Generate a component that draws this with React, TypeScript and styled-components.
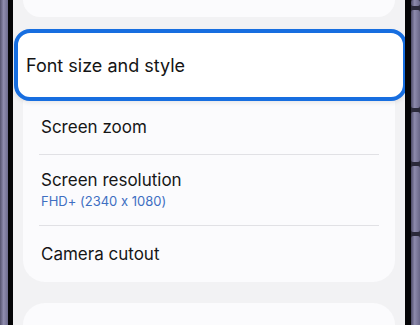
import React from "react";
import styled, { createGlobalStyle } from "styled-components";

const Global = createGlobalStyle`
  html, body {
    margin: 0;
    padding: 0;
    background: #000;
  }
  body {
    font-family: Inter, "Noto Sans", Roboto, sans-serif;
    font-feature-settings: "calt" 0;
    -webkit-font-smoothing: antialiased;
  }
`;

const Phone = styled.div`
  width: 420px;
  height: 325px;
  display: flex;
  overflow: hidden;
`;

const FrameLeft = styled.div`
  width: 8px;
  background: linear-gradient(90deg, #55536f 0%, #8f8cae 45%, #6e6c8e 100%);
`;

const FrameRight = styled.div`
  width: 9px;
  display: flex;
  flex-direction: column;
  gap: 4px;
  background: #2b2a3a;
`;

const Segment = styled.div<{ $h: number }>`
  height: ${(p) => p.$h}px;
  flex-shrink: 0;
  background: linear-gradient(90deg, #4d4b66 0%, #8d8aac 40%, #6a6889 100%);
  border-radius: 2px;
`;

const Bezel = styled.div<{ $w: number }>`
  width: ${(p) => p.$w}px;
  background: #050507;
`;

const Screen = styled.div`
  flex: 1;
  background: #f2f2f4;
  display: flex;
  flex-direction: column;
  overflow: hidden;
  & > * {
    flex-shrink: 0;
  }
`;

const TopCard = styled.div`
  height: 17px;
  margin: 0 10px;
  background: #fbfbfd;
  border-radius: 0 0 22px 22px;
`;

const Highlight = styled.div`
  height: 72px;
  box-sizing: border-box;
  margin: 12px -2px 0 1px;
  border: 4px solid #176ee0;
  border-radius: 16px;
  background: #ffffff;
  display: flex;
  align-items: center;
  padding-left: 8px;
  font-size: 18px;
  color: #141414;
  position: relative;
  z-index: 1;
  box-shadow: 0 2px 4px rgba(0, 0, 0, 0.08);
`;

const Card = styled.div`
  margin: 0 10px;
  background: #fbfbfd;
  border-radius: 0 0 22px 22px;
  display: flex;
  flex-direction: column;
`;

const Row = styled.div<{ $h: number }>`
  height: ${(p) => p.$h}px;
  padding-left: 18px;
  display: flex;
  flex-direction: column;
  justify-content: center;
`;

const Title = styled.div`
  font-size: 17px;
  color: #161616;
  line-height: 21px;
`;

const Sub = styled.div`
  font-size: 13px;
  color: #3f6fc2;
  line-height: 20px;
`;

const Divider = styled.div`
  height: 1px;
  margin: 0 16px;
  background: #e1e1e5;
`;

const BottomCard = styled.div`
  margin: 21px 10px 0;
  height: 40px;
  background: #fbfbfd;
  border-radius: 22px 22px 0 0;
`;

export default function App() {
  return (
    <>
      <Global />
      <Phone>
        <FrameLeft />
        <Bezel $w={5} />
        <Screen>
          <TopCard />
          <Highlight>Font size and style</Highlight>
          <Card>
            <Row $h={53}>
              <Title>Screen zoom</Title>
            </Row>
            <Divider />
            <Row $h={70}>
              <Title>Screen resolution</Title>
              <Sub>FHD+ (2340 x 1080)</Sub>
            </Row>
            <Divider />
            <Row $h={56}>
              <Title>Camera cutout</Title>
            </Row>
          </Card>
          <BottomCard />
        </Screen>
        <Bezel $w={6} />
        <FrameRight>
          <Segment $h={6} />
          <Segment $h={98} />
          <Segment $h={50} />
          <Segment $h={66} />
          <Segment $h={120} />
        </FrameRight>
      </Phone>
    </>
  );
}
